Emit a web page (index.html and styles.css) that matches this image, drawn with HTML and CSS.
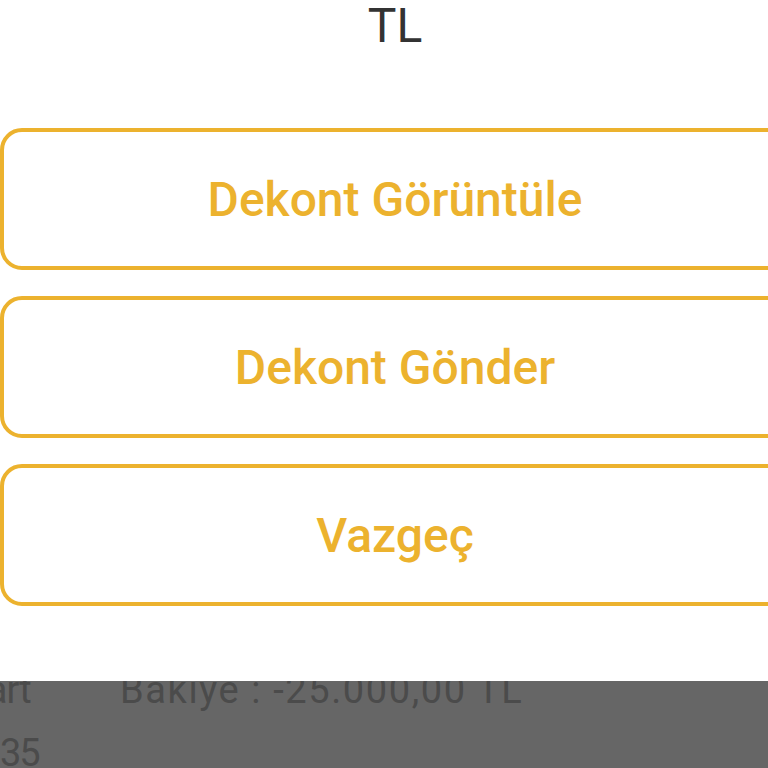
FILE: index.html
```html
<!DOCTYPE html>
<html lang="tr">
<head>
<meta charset="utf-8">
<link rel="stylesheet" href="styles.css">
</head>
<body>
<div class="screen">
  <div class="dialog">
    <div class="title">TL</div>
    <div class="actions">
      <div class="btn">Dekont Görüntüle</div>
      <div class="btn">Dekont Gönder</div>
      <div class="btn">Vazgeç</div>
    </div>
  </div>
  <div class="backdrop">
    <div class="rows">
      <div class="row"><span class="lbl">Kart</span><span class="val">Bakiye : -25.000,00 TL</span></div>
      <div class="row"><span class="lbl num">35</span><span class="val"></span></div>
    </div>
  </div>
</div>
</body>
</html>
```
FILE: styles.css
```css
html, body {
  margin: 0;
  padding: 0;
  background: #ffffff;
  overflow: hidden;
}
.screen {
  width: 768px;
  height: 768px;
  overflow: hidden;
  display: flex;
  flex-direction: column;
  font-family: Roboto, "Noto Sans", sans-serif;
}
.dialog {
  width: 790px;
  height: 681px;
  flex: none;
  background: #ffffff;
  display: flex;
  flex-direction: column;
}
.title {
  font-size: 48px;
  line-height: 52px;
  color: #333333;
  text-align: center;
}
.actions {
  margin-top: 76px;
  display: flex;
  flex-direction: column;
  gap: 26px;
}
.btn {
  box-sizing: border-box;
  height: 142px;
  border: 4px solid #ecb22e;
  border-radius: 22px;
  display: flex;
  align-items: center;
  justify-content: center;
  font-size: 48px;
  font-weight: 500;
  color: #ecb22e;
}
.backdrop {
  flex: 1;
  background: #666666;
  overflow: hidden;
}
.rows {
  margin-top: -22px;
  margin-left: -36px;
  display: flex;
  flex-direction: column;
}
.row {
  display: flex;
  height: 63px;
  align-items: center;
  font-size: 38px;
  line-height: 63px;
  color: #4b4b4b;
}
.lbl {
  width: 156px;
  flex: none;
  letter-spacing: -1px;
}
.num {
  padding-left: 36px;
  box-sizing: border-box;
  letter-spacing: -2px;
}
.val {
  letter-spacing: 1.6px;
}
```
